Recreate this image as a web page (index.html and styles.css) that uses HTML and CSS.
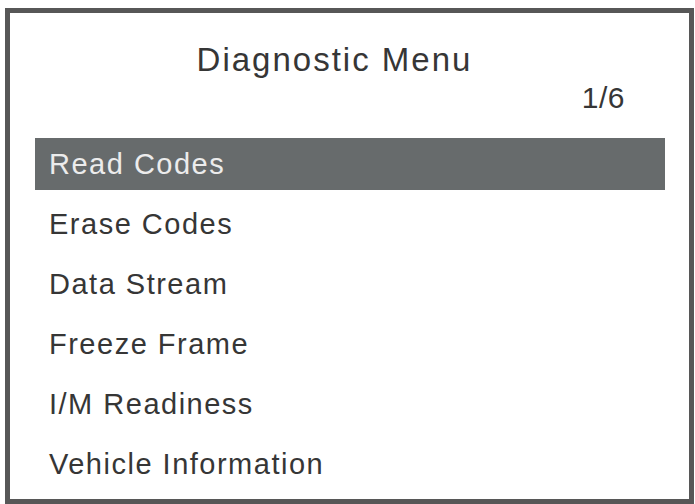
FILE: index.html
```html
<!DOCTYPE html>
<html lang="en">
<head>
<meta charset="utf-8">
<title>Diagnostic Menu</title>
<link rel="stylesheet" href="styles.css">
</head>
<body>
<div class="screen">
  <div class="title">Diagnostic Menu</div>
  <div class="page">1/6</div>
  <ul class="menu">
    <li class="item selected">Read Codes</li>
    <li class="item">Erase Codes</li>
    <li class="item">Data Stream</li>
    <li class="item">Freeze Frame</li>
    <li class="item">I/M Readiness</li>
    <li class="item">Vehicle Information</li>
  </ul>
</div>
</body>
</html>
```
FILE: styles.css
```css
html, body {
  margin: 0;
  padding: 0;
  background: #ffffff;
  overflow: hidden;
}
body {
  width: 695px;
  height: 504px;
  font-family: "Liberation Sans", Arial, sans-serif;
  color: #363636;
}
.screen {
  box-sizing: border-box;
  margin: 8px 0 0 5px;
  width: 689px;
  height: 496px;
  border: 5px solid #575757;
  background: #ffffff;
  padding-top: 27px;
}
.title {
  font-size: 33px;
  line-height: 40px;
  height: 40px;
  letter-spacing: 2px;
  text-align: center;
  padding-right: 30px;
}
.page {
  font-size: 30px;
  line-height: 36px;
  height: 36px;
  letter-spacing: 0.5px;
  text-align: right;
  padding-right: 64px;
}
.menu {
  list-style: none;
  margin: 22px 24px 0 25px;
  padding: 0;
  display: flex;
  flex-direction: column;
  gap: 8px;
}
.item {
  font-size: 29px;
  line-height: 52px;
  height: 52px;
  letter-spacing: 1.5px;
  padding-left: 14px;
}
.item.selected {
  background: #676b6c;
  color: #ececec;
}
```
